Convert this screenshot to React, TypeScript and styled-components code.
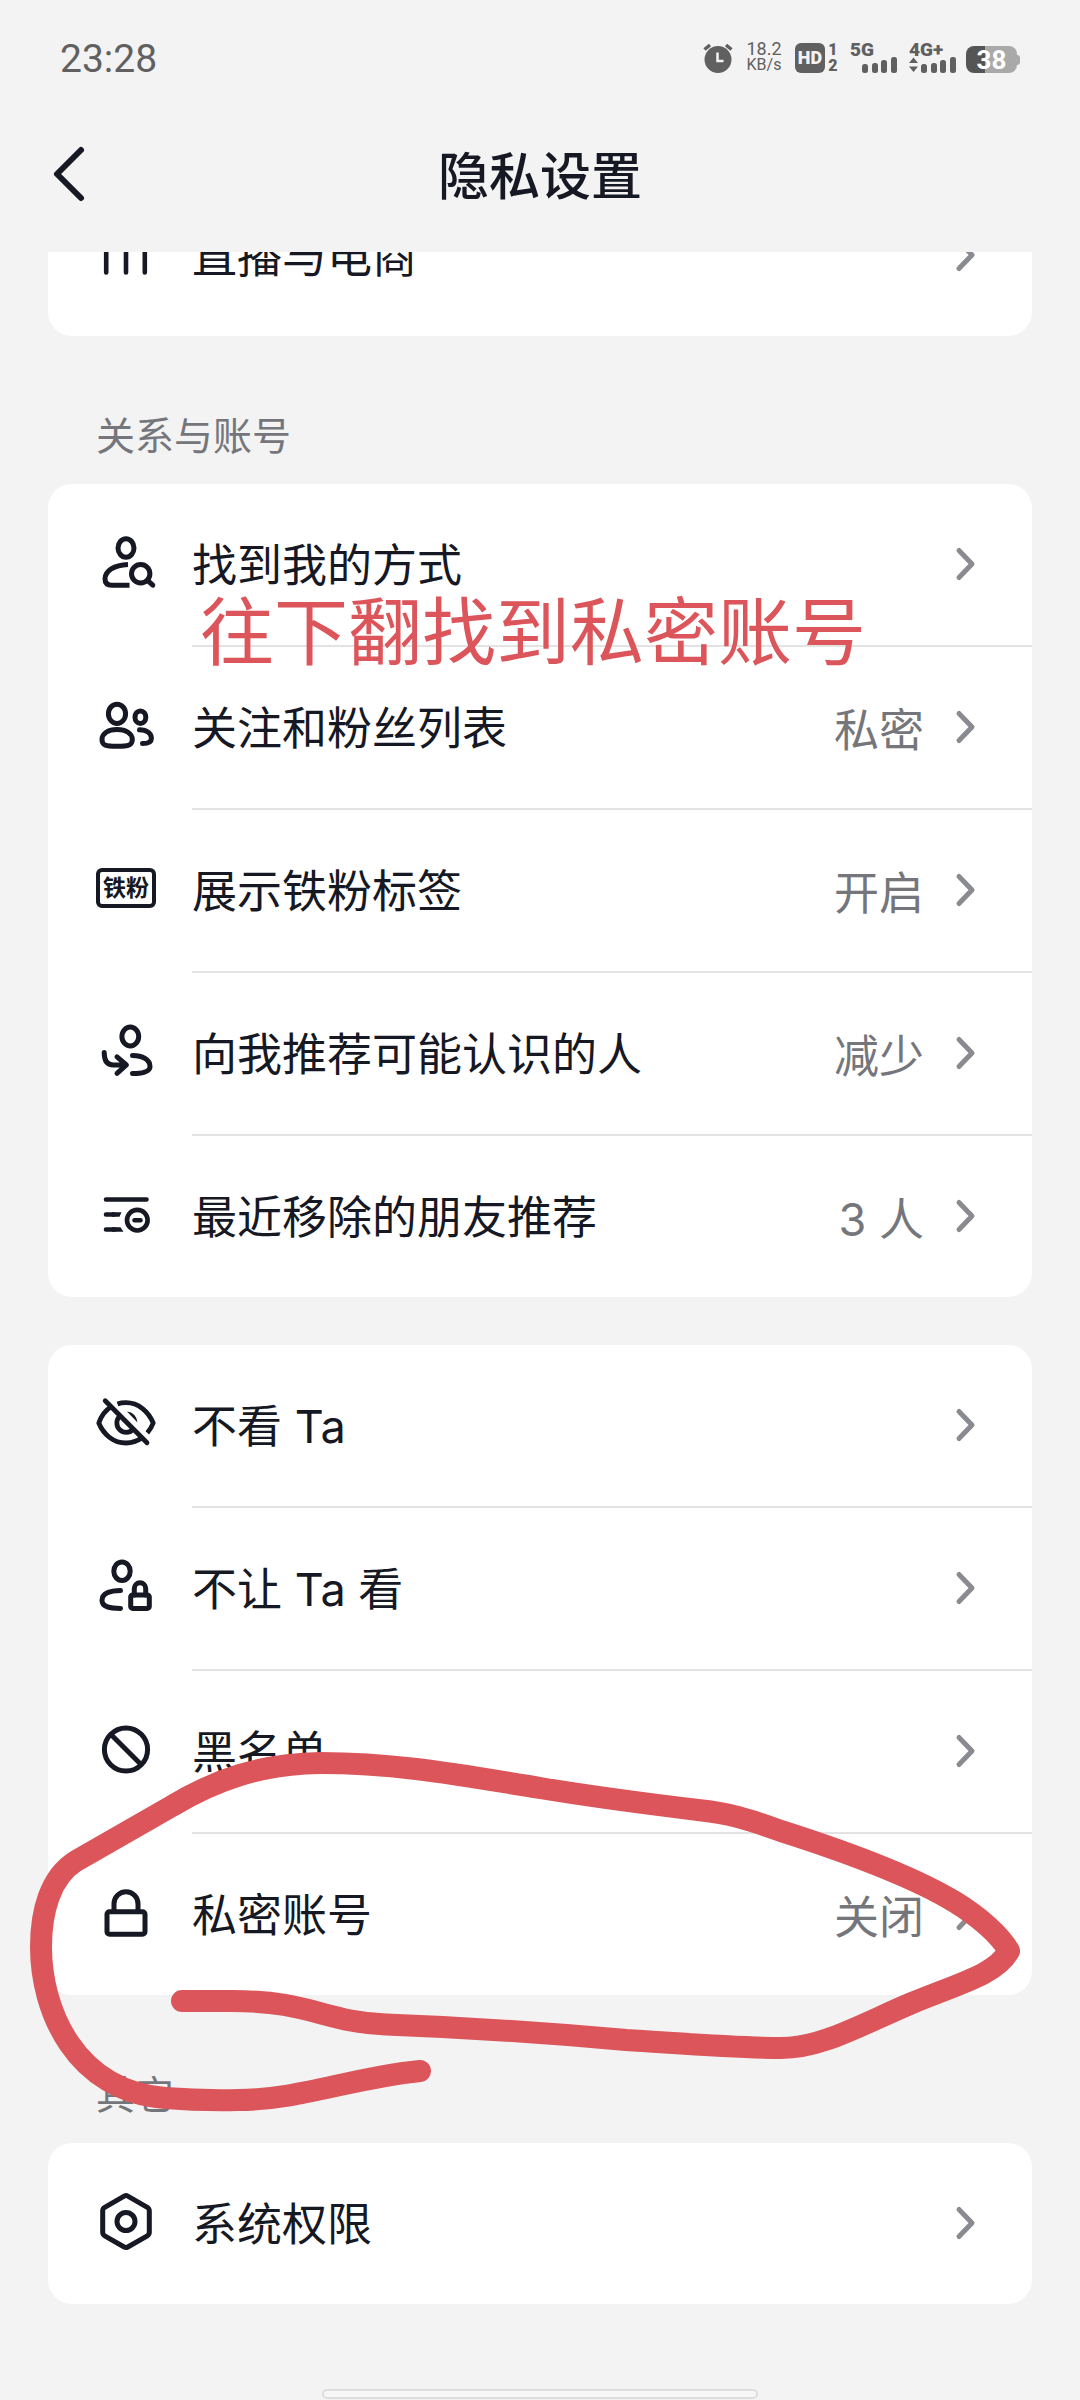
import React from "react";
import styled, { createGlobalStyle } from "styled-components";

const GlobalStyle = createGlobalStyle`
  * { box-sizing: border-box; }
  body {
    margin: 0;
    background: #f3f3f3;
    color: #161823;
    font-family: Inter, "Noto Sans CJK SC", sans-serif;
  }
  button { font: inherit; color: inherit; }
`;

const Page = styled.div`
  min-height: 100vh;
  display: flex;
  flex-direction: column;
  overflow: hidden;
`;

/* ---------- status bar ---------- */

const StatusBar = styled.div`
  height: 96px;
  padding: 20px 60px 0;
  display: flex;
  align-items: center;
  justify-content: space-between;
  color: #606060;
  font-family: Roboto, sans-serif;
`;

const Clock = styled.time`
  padding-top: 2px;
  font-size: 39px;
  line-height: 40px;
`;

const StatusIcons = styled.div`
  display: flex;
  align-items: flex-end;
  gap: 12px;
  height: 30px;
`;

const NetSpeed = styled.div`
  width: 38px;
  display: flex;
  flex-direction: column;
  align-items: center;
  font-size: 18px;
  line-height: 16px;
`;

const NetUnit = styled.span`
  font-size: 16px;
`;

const HdGroup = styled.div`
  display: flex;
  gap: 3px;
`;

const HdBadge = styled.div`
  width: 30px;
  height: 30px;
  border-radius: 6px;
  background: #606060;
  color: #f3f3f3;
  font-size: 18px;
  font-weight: 900;
  line-height: 30px;
  text-align: center;
`;

const SimNumbers = styled.div`
  width: 10px;
  display: flex;
  flex-direction: column;
  justify-content: space-between;
  font-size: 16px;
  font-weight: 900;
  line-height: 14px;
  text-align: center;
`;

const Signal = styled.div<{ $width: number }>`
  width: ${(p) => p.$width}px;
  height: 30px;
  display: grid;
  & > * { grid-area: 1 / 1; }
`;

const SignalLabel = styled.span`
  font-size: 19px;
  font-weight: 900;
  line-height: 14px;
`;

const SignalBars = styled.svg`
  place-self: end;
  display: block;
`;

const Battery = styled.div`
  margin-left: -2px;
  display: flex;
  align-items: center;
`;

const BatteryBody = styled.div`
  width: 51px;
  height: 27px;
  border-radius: 8px;
  background: linear-gradient(to right, #555555 38%, #a9a9a9 38%);
  color: #ffffff;
  font-size: 26px;
  font-weight: 700;
  line-height: 28px;
  text-align: center;
`;

const BatteryCap = styled.div`
  width: 3px;
  height: 10px;
  border-radius: 0 3px 3px 0;
  background: #a9a9a9;
`;

/* ---------- header ---------- */

const Header = styled.header`
  height: 156px;
  padding: 0 48px;
  display: grid;
  grid-template-columns: 60px 1fr 60px;
  align-items: center;
`;

const BackButton = styled.button`
  height: 60px;
  padding: 0;
  border: 0;
  background: none;
  cursor: pointer;
  svg { display: block; }
`;

const Title = styled.h1`
  margin: 0;
  padding-top: 6px;
  font-size: 51px;
  font-weight: 500;
  line-height: 60px;
  text-align: center;
`;

/* ---------- list ---------- */

const Content = styled.main`
  flex: 1;
  padding: 0 48px;
  overflow: hidden;
`;

const ScrolledList = styled.div`
  margin-top: -77px;
`;

const SectionTitle = styled.h2`
  margin: 0;
  padding: 72px 48px 20px;
  color: #75767b;
  font-size: 39px;
  font-weight: 400;
  line-height: 56px;
`;

const CardFrame = styled.div<{ $spaced?: boolean }>`
  position: relative;
  margin-top: ${(p) => (p.$spaced ? 48 : 0)}px;
`;

const Card = styled.ul`
  margin: 0;
  padding: 0;
  list-style: none;
  border-radius: 24px;
  background: #ffffff;
`;

const Item = styled.li`
  & + &::before {
    content: "";
    display: block;
    height: 2px;
    margin-left: 144px;
    background: #e3e3e4;
  }
`;

const Row = styled.button`
  width: 100%;
  height: 161px;
  padding: 0 48px;
  border: 0;
  background: none;
  display: flex;
  align-items: center;
  text-align: left;
  font-size: 45px;
  line-height: 60px;
  cursor: pointer;
`;

const Glyph = styled.svg`
  flex: none;
  width: 60px;
  height: 60px;
  margin-right: 36px;
  overflow: visible;
  fill: none;
  stroke: #161823;
  stroke-width: 5;
  stroke-linecap: round;
  stroke-linejoin: round;
`;

const FanBadge = styled.span`
  flex: none;
  width: 60px;
  height: 40px;
  margin: 0 36px 6px 0;
  border: 4px solid #161823;
  border-radius: 6px;
  font-size: 23px;
  font-weight: 700;
  line-height: 32px;
  white-space: nowrap;
  display: flex;
  justify-content: center;
`;

const RowLabel = styled.span`
  flex: 1;
  padding-top: 2px;
`;

const RowValue = styled.span`
  margin-right: 24px;
  padding-top: 6px;
  color: #75767b;
`;

const Chevron = styled.svg`
  flex: none;
  width: 36px;
  height: 36px;
  margin-bottom: 2px;
  fill: none;
  stroke: #8a8b91;
  stroke-width: 5;
  stroke-linecap: round;
  stroke-linejoin: round;
`;

/* ---------- hand-made notes over the list ---------- */

const Note = styled.p`
  position: absolute;
  top: 108px;
  left: 152px;
  margin: 0;
  color: #db555a;
  font-size: 74px;
  line-height: 80px;
  white-space: nowrap;
  pointer-events: none;
`;

const Doodle = styled.svg`
  position: absolute;
  top: 355px;
  left: -48px;
  width: 1080px;
  height: 440px;
  fill: none;
  stroke: #db555a;
  stroke-width: 22;
  stroke-linecap: round;
  stroke-linejoin: round;
  pointer-events: none;
`;

const HomeIndicator = styled.div`
  width: 436px;
  height: 10px;
  margin: 0 auto 1px;
  border: 2px solid #dedede;
  border-radius: 5px;
  background: #f7f7f7;
`;

const icons: Record<string, React.ReactNode> = {
  live: <path strokeWidth="4.6" d="M10.2 12v34.5M30 12v34.5M48.8 12v34.5" />,
  find: (
    <>
      <ellipse cx="30" cy="13" rx="8" ry="9.2" />
      <path strokeLinecap="butt" d="M32 29.5C18 30 9 36 9 44c0 4.5 2.5 6.2 7 6.2h17.5" />
      <circle cx="44.7" cy="38.8" r="9.2" />
      <path d="M51.5 45.3l5.3 4.9" />
    </>
  ),
  people: (
    <>
      <ellipse cx="21" cy="15.8" rx="8.6" ry="9.6" />
      <path d="M21 31.5C30 31.5 36.3 35.5 36.3 41.5C36.3 47 33 48.3 21 48.3C9 48.3 6 47 6 41.5C6 35.5 12 31.5 21 31.5Z" />
      <ellipse cx="44.4" cy="19.2" rx="5.4" ry="6.3" />
      <path d="M43.5 31.8C51 32 55.4 35.5 55.4 40.5C55.4 44.5 52 45.5 46.5 45.6" />
    </>
  ),
  suggest: (
    <>
      <ellipse cx="34.3" cy="12.5" rx="8.4" ry="9.5" />
      <path d="M8.2 28.5c0 8 2.5 12.4 9 12.4h13M21 32.8l9.4 8.1-9.4 8.4" />
      <path d="M36.5 31.4c10 0 17.5 4 17.5 11 0 5.5-7.5 7-17.5 7.2" />
    </>
  ),
  removed: (
    <>
      <path strokeWidth="4.6" d="M10 12.5h40.5M38.5 33.2h6" />
      <path strokeWidth="4.6" d="M10 27.5h8M10 42.5h9" />
      <path fill="#161823" stroke="none" d="M16 25.2h9.5l-2 4.6h-7.5zM16 40.2h8.5l3 4.6h-11.5z" />
      <circle cx="41.3" cy="33.2" r="10.3" strokeWidth="4.6" />
    </>
  ),
  eye: (
    <g strokeLinecap="butt" strokeWidth="4.8">
      <path d="M15.5 10.5C9 14.5 5 20.5 2.8 27C7.5 38.5 17.5 47 30 47C36 47 41.5 45 46 41.8" />
      <path d="M21.5 8C24 7.1 27 6.7 30 6.7C42.5 6.7 52.5 15.5 57.2 27C55.8 30.8 53.8 34 51.3 36.8" />
      <path d="M23.5 20.5A9.2 9.2 0 0 0 37 33.5" />
      <path fill="#161823" stroke="none" d="M31 15.5A11.5 11.5 0 0 1 41.5 26.5Z" />
      <path strokeLinecap="round" d="M9.2 4.8L51 46.8" />
    </g>
  ),
  personLock: (
    <>
      <ellipse cx="26" cy="12.2" rx="8.2" ry="9.3" />
      <path d="M24.5 31.4C14 31.5 6 34.5 6 41.5C6 48 14 49.2 24.5 49.5" />
      <rect x="34.7" y="36" width="18.6" height="13.4" rx="2" />
      <path d="M38.3 36v-6.5a5.7 5.7 0 0 1 11.4 0v6.5" />
    </>
  ),
  ban: (
    <>
      <circle cx="30" cy="27.5" r="21.6" />
      <path strokeLinecap="butt" d="M14.5 12l31 31" />
    </>
  ),
  lock: (
    <>
      <rect x="11" y="26.8" width="38" height="22.4" rx="2.5" />
      <path d="M18 26.5V18.8a12 12 0 0 1 24 0V26.5" />
    </>
  ),
  hex: (
    <>
      <path d="M28.2 2.1q1.8-1 3.6 0L51.3 13.3q2 1.2 2 3.5v21.5q0 2.3-2 3.5L31.8 53q-1.8 1-3.6 0L8.7 41.8q-2-1.2-2-3.5V16.8q0-2.3 2-3.5Z" />
      <circle cx="30" cy="27.5" r="9" />
    </>
  ),
};

type Entry = { icon: string; label: string; value?: string };

const relations: Entry[] = [
  { icon: "find", label: "找到我的方式" },
  { icon: "people", label: "关注和粉丝列表", value: "私密" },
  { icon: "badge", label: "展示铁粉标签", value: "开启" },
  { icon: "suggest", label: "向我推荐可能认识的人", value: "减少" },
  { icon: "removed", label: "最近移除的朋友推荐", value: "3 人" },
];

const blocking: Entry[] = [
  { icon: "eye", label: "不看 Ta" },
  { icon: "personLock", label: "不让 Ta 看" },
  { icon: "ban", label: "黑名单" },
  { icon: "lock", label: "私密账号", value: "关闭" },
];

function SettingsCard({ entries }: { entries: Entry[] }) {
  return (
    <Card>
      {entries.map((e) => (
        <Item key={e.label}>
          <Row type="button">
            {e.icon === "badge" ? (
              <FanBadge aria-hidden="true">铁粉</FanBadge>
            ) : (
              <Glyph viewBox="0 0 60 60" aria-hidden="true">{icons[e.icon]}</Glyph>
            )}
            <RowLabel>{e.label}</RowLabel>
            {e.value && <RowValue>{e.value}</RowValue>}
            <Chevron viewBox="0 0 36 36" aria-hidden="true">
              <path d="M11 4.5L24 18L11 31.5" />
            </Chevron>
          </Row>
        </Item>
      ))}
    </Card>
  );
}

function Bars({ data }: { data?: boolean }) {
  return (
    <SignalBars width={data ? 47 : 35} height="17" viewBox={data ? "-12 0 47 17" : "0 0 35 17"} fill="#606060">
      {data && <path d="M-12 7L-7.5 1.5L-3 7ZM-12 10.5L-7.5 16L-3 10.5Z" />}
      <rect x="0" y="8" width="6" height="9" rx="2.5" />
      <rect x="10" y="7" width="6" height="10" rx="2.5" />
      <rect x="19" y="4" width="6" height="13" rx="2.5" />
      <rect x="29" y="1" width="6" height="16" rx="2.5" />
    </SignalBars>
  );
}

export default function App() {
  return (
    <Page>
      <GlobalStyle />
      <StatusBar>
        <Clock>23:28</Clock>
        <StatusIcons>
          <svg width="30" height="30" viewBox="0 0 30 30" aria-hidden="true">
            <circle cx="15" cy="16.5" r="13.5" fill="#606060" />
            <path d="M1.5 6.5L7 2M28.5 6.5L23 2" stroke="#606060" strokeWidth="3.5" fill="none" />
            <path d="M14.5 9.5v8.5h6" stroke="#f3f3f3" strokeWidth="2.5" fill="none" />
          </svg>
          <NetSpeed>
            <span>18.2</span>
            <NetUnit>KB/s</NetUnit>
          </NetSpeed>
          <HdGroup>
            <HdBadge>HD</HdBadge>
            <SimNumbers>
              <span>1</span>
              <span>2</span>
            </SimNumbers>
          </HdGroup>
          <Signal $width={47}>
            <SignalLabel>5G</SignalLabel>
            <Bars />
          </Signal>
          <Signal $width={47}>
            <SignalLabel>4G+</SignalLabel>
            <Bars data />
          </Signal>
          <Battery>
            <BatteryBody>38</BatteryBody>
            <BatteryCap />
          </Battery>
        </StatusIcons>
      </StatusBar>
      <Header>
        <BackButton type="button" aria-label="返回">
          <svg width="42" height="60" viewBox="0 0 42 60" fill="none" stroke="#161823" strokeWidth="6" strokeLinecap="round" strokeLinejoin="round">
            <path d="M33 6L9 30L33 54" />
          </svg>
        </BackButton>
        <Title>隐私设置</Title>
      </Header>
      <Content>
        <ScrolledList>
          <SettingsCard entries={[{ icon: "live", label: "直播与电商" }]} />
          <SectionTitle>关系与账号</SectionTitle>
          <CardFrame>
            <SettingsCard entries={relations} />
            <Note>往下翻找到私密账号</Note>
          </CardFrame>
          <CardFrame $spaced>
            <SettingsCard entries={blocking} />
            <Doodle viewBox="0 0 1080 440" aria-hidden="true">
              <path d="M182 301H232C310 301 325 322 386 324.5C480 328 560 334 626 340C690 344 740 348 781 348C822 348 860 325 912 303C960 283 995 275 1009 251C1000 235 978 216 955 202C912 176 850 153 781 131C748 119 728 113 698 110C640 103 600 98 540 88C465 76 400 63 320 63C260 64 215 80 172 106L76 161C50 177 41 212 41 247C41 310 75 391 165 398C190 400 215 400.5 238 400C300 400 350 378 420 371" />
            </Doodle>
          </CardFrame>
          <SectionTitle>其它</SectionTitle>
          <SettingsCard entries={[{ icon: "hex", label: "系统权限" }]} />
        </ScrolledList>
      </Content>
      <HomeIndicator />
    </Page>
  );
}
